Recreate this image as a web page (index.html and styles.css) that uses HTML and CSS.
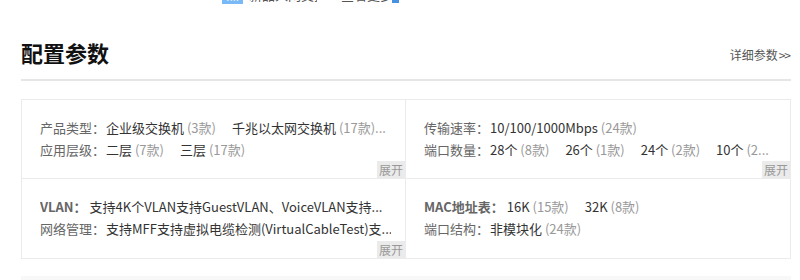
FILE: index.html
```html
<!DOCTYPE html>
<html lang="zh-CN">
<head>
<meta charset="utf-8">
<title>配置参数</title>
<link rel="stylesheet" href="styles.css">
</head>
<body>
<div class="topstrip">
  <div class="topstrip-row">
    <span class="tag">热销</span>
    <span class="tip">新品入网交换机评测</span>
    <span class="tip tip2">查看更多相关推荐</span>
    <span class="tip-icon"></span>
  </div>
</div>
<div class="wrap">
  <div class="head">
    <h2 class="title">配置参数</h2>
    <a class="more">详细参数<span class="arr">&gt;&gt;</span></a>
  </div>
  <div class="grid">
    <div class="cell">
      <div class="line"><span class="lab">产品类型：</span><span class="item">企业级交换机 <em>(3款)</em></span><span class="item">千兆以太网交换机 <em>(17款)...</em></span></div>
      <div class="line"><span class="lab">应用层级：</span><span class="item">二层 <em>(7款)</em></span><span class="item">三层 <em>(17款)</em></span></div>
      <span class="expand">展开</span>
    </div>
    <div class="cell">
      <div class="line"><span class="lab">传输速率：</span><span class="item">10/100/1000Mbps <em>(24款)</em></span></div>
      <div class="line"><span class="lab">端口数量：</span><span class="item">28个 <em>(8款)</em></span><span class="item">26个 <em>(1款)</em></span><span class="item">24个 <em>(2款)</em></span><span class="item">10个 <em>(2...</em></span></div>
      <span class="expand">展开</span>
    </div>
    <div class="cell row2">
      <div class="line"><span class="lab strong">VLAN：</span><span class="item">支持4K个VLAN支持GuestVLAN、VoiceVLAN支持...</span></div>
      <div class="line"><span class="lab">网络管理：</span><span class="item">支持MFF支持虚拟电缆检测(VirtualCableTest)支...</span></div>
      <span class="expand">展开</span>
    </div>
    <div class="cell row2">
      <div class="line"><span class="lab strong">MAC地址表：</span><span class="item">16K <em>(15款)</em></span><span class="item">32K <em>(8款)</em></span></div>
      <div class="line"><span class="lab">端口结构：</span><span class="item">非模块化 <em>(24款)</em></span></div>
    </div>
  </div>
  <div class="next"></div>
</div>
</body>
</html>
```

FILE: styles.css
```css
* { box-sizing: border-box; }
html, body { margin: 0; padding: 0; background: #fff; }
body {
  font-family: "Noto Sans CJK SC", "Noto Sans", sans-serif;
  color: #333;
  width: 800px;
  height: 280px;
  overflow: hidden;
}
.topstrip {
  height: 4px;
  overflow: hidden;
}
.topstrip-row {
  display: flex;
  align-items: flex-end;
  height: 18px;
  margin-top: -14px;
  padding-left: 222px;
}
.tag {
  display: block;
  width: 21px;
  height: 18px;
  background: #7ab9f7;
  color: #fff;
  font-size: 12px;
  line-height: 18px;
  text-align: center;
  overflow: hidden;
}
.tip {
  font-size: 13px;
  line-height: 18px;
  color: #555;
  margin-left: 6px;
  white-space: nowrap;
  width: 68px;
  overflow: hidden;
}
.tip2 { margin-left: 24px; width: 48px; }
.tip-icon {
  display: block;
  width: 7px;
  height: 10px;
  margin-left: 3px;
  margin-bottom: 1px;
  background: #4a90e2;
}
.wrap {
  margin-left: 21px;
  width: 770px;
}
.head {
  display: flex;
  justify-content: space-between;
  align-items: flex-start;
  height: 77px;
  padding-top: 33px;
  border-bottom: 2px solid #e6e6e6;
}
.title {
  margin: 0;
  font-size: 22px;
  line-height: 30px;
  font-weight: 700;
  color: #111;
}
.more {
  margin-top: 9px;
  font-size: 12px;
  line-height: 18px;
  color: #555;
  white-space: nowrap;
  margin-right: 1px;
}
.arr { letter-spacing: -1px; margin-left: 1px; }
.grid {
  margin-top: 18px;
  display: grid;
  grid-template-columns: 384px 385px;
  border-top: 1px solid #ebebeb;
  border-left: 1px solid #ebebeb;
}
.cell {
  position: relative;
  height: 79px;
  padding: 17px 14px 0 18px;
  border-right: 1px solid #ebebeb;
  border-bottom: 1px solid #ebebeb;
}
.cell.row2 { height: 80px; }
.line {
  font-size: 13px;
  line-height: 22px;
  white-space: nowrap;
  overflow: hidden;
}
.lab { color: #666; margin-right: 1px; }
.lab.strong { font-weight: 600; margin-right: 3px; }
.item { color: #333; margin-right: 16px; }
.item em { font-style: normal; color: #999; }
.expand {
  position: absolute;
  right: 0;
  bottom: 0;
  width: 28px;
  height: 17px;
  background: #ebebeb;
  color: #999;
  font-size: 12px;
  line-height: 17px;
  text-align: center;
}
.next {
  margin-top: 17px;
  height: 10px;
  background: #f8f8f8;
}
```
